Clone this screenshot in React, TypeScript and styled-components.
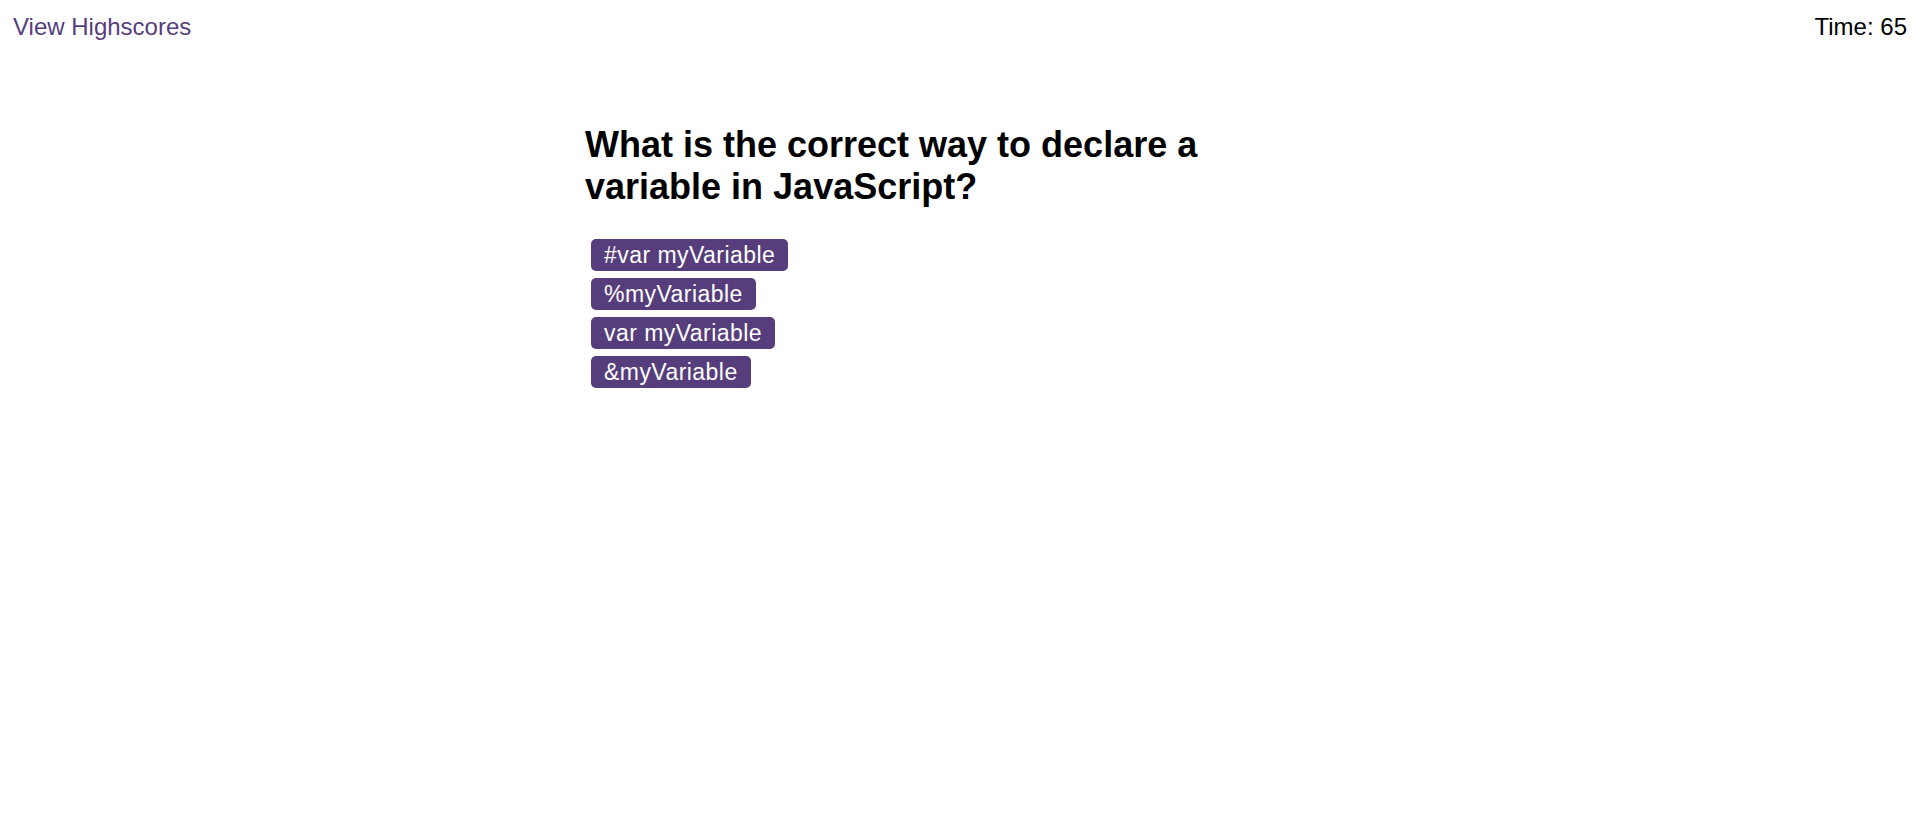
import React from "react";
import styled, { createGlobalStyle } from "styled-components";

const GlobalStyle = createGlobalStyle`
  html, body {
    margin: 0;
    padding: 0;
    background: #ffffff;
  }
  body {
    font-family: "Liberation Sans", Arial, sans-serif;
    color: #000000;
  }
`;

const Page = styled.div`
  padding: 13px 13px;
`;

const Header = styled.header`
  display: flex;
  justify-content: space-between;
  align-items: flex-start;
`;

const HighscoreLink = styled.a`
  font-size: 24px;
  line-height: 27px;
  color: #563d7c;
  text-decoration: none;
  cursor: pointer;
`;

const Timer = styled.div`
  font-size: 24px;
  line-height: 27px;
  color: #000000;
`;

const Quiz = styled.main`
  margin: 84px 0 0 572px;
  width: 680px;
`;

const Question = styled.h1`
  margin: 0;
  font-family: "Liberation Sans", Arial, sans-serif;
  font-weight: 700;
  font-size: 36px;
  line-height: 42px;
  color: #000000;
`;

const Choices = styled.ol`
  list-style: none;
  margin: 31px 0 0 6px;
  padding: 0;
  display: flex;
  flex-direction: column;
  align-items: flex-start;
  gap: 7px;
`;

const Choice = styled.button`
  font-family: "Liberation Sans", Arial, sans-serif;
  font-size: 23px;
  line-height: 26px;
  letter-spacing: 0.45px;
  padding: 3px 13px;
  border: none;
  border-radius: 5px;
  background: #563d7c;
  color: #ffffff;
  cursor: pointer;
`;

const choices = ["#var myVariable", "%myVariable", "var myVariable", "&myVariable"];

export default function App() {
  return (
    <>
      <GlobalStyle />
      <Page>
        <Header>
          <HighscoreLink>View Highscores</HighscoreLink>
          <Timer>Time: 65</Timer>
        </Header>
        <Quiz>
          <Question>What is the correct way to declare a variable in JavaScript?</Question>
          <Choices>
            {choices.map((c) => (
              <li key={c}>
                <Choice>{c}</Choice>
              </li>
            ))}
          </Choices>
        </Quiz>
      </Page>
    </>
  );
}
